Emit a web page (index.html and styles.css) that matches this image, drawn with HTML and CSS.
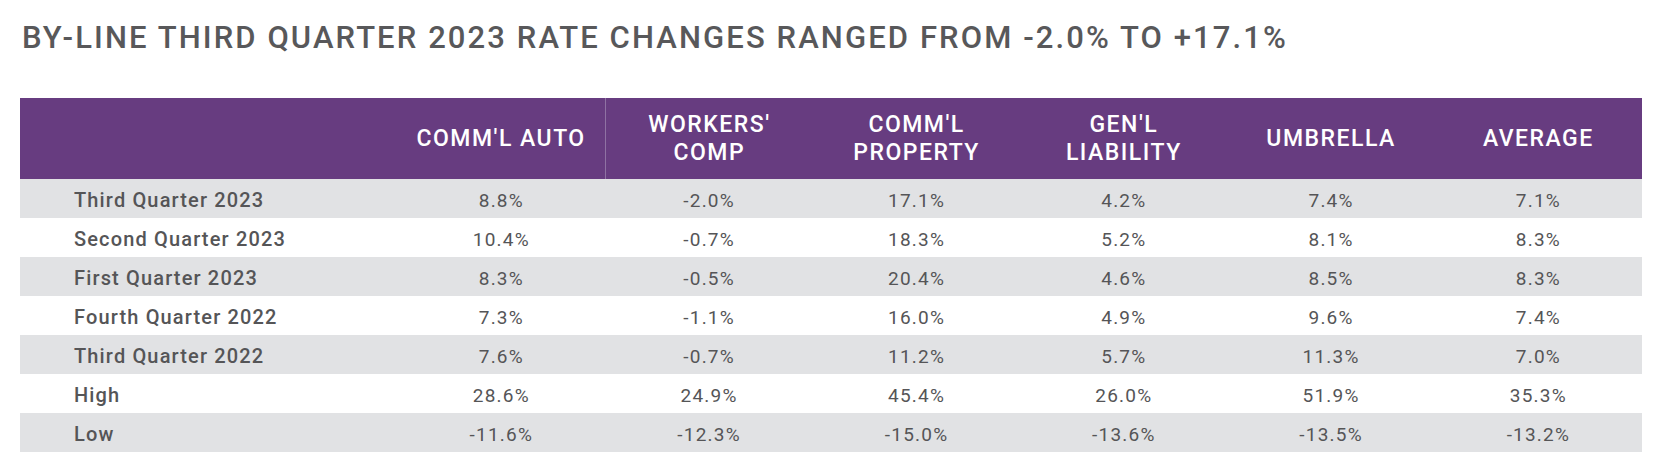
FILE: index.html
```html
<!DOCTYPE html>
<html lang="en">
<head>
<meta charset="utf-8">
<title>By-line rate changes</title>
<link rel="stylesheet" href="styles.css">
</head>
<body>
<h1 class="title">BY-LINE THIRD QUARTER 2023 RATE CHANGES RANGED FROM -2.0% TO +17.1%</h1>
<table class="rates">
  <thead>
    <tr>
      <th class="label-col"></th>
      <th class="sep">COMM'L AUTO</th>
      <th>WORKERS'<br>COMP</th>
      <th>COMM'L<br>PROPERTY</th>
      <th>GEN'L<br>LIABILITY</th>
      <th>UMBRELLA</th>
      <th>AVERAGE</th>
    </tr>
  </thead>
  <tbody>
    <tr class="alt"><td class="label">Third Quarter 2023</td><td>8.8%</td><td>-2.0%</td><td>17.1%</td><td>4.2%</td><td>7.4%</td><td>7.1%</td></tr>
    <tr><td class="label">Second Quarter 2023</td><td>10.4%</td><td>-0.7%</td><td>18.3%</td><td>5.2%</td><td>8.1%</td><td>8.3%</td></tr>
    <tr class="alt"><td class="label">First Quarter 2023</td><td>8.3%</td><td>-0.5%</td><td>20.4%</td><td>4.6%</td><td>8.5%</td><td>8.3%</td></tr>
    <tr><td class="label">Fourth Quarter 2022</td><td>7.3%</td><td>-1.1%</td><td>16.0%</td><td>4.9%</td><td>9.6%</td><td>7.4%</td></tr>
    <tr class="alt"><td class="label">Third Quarter 2022</td><td>7.6%</td><td>-0.7%</td><td>11.2%</td><td>5.7%</td><td>11.3%</td><td>7.0%</td></tr>
    <tr><td class="label">High</td><td>28.6%</td><td>24.9%</td><td>45.4%</td><td>26.0%</td><td>51.9%</td><td>35.3%</td></tr>
    <tr class="alt"><td class="label">Low</td><td>-11.6%</td><td>-12.3%</td><td>-15.0%</td><td>-13.6%</td><td>-13.5%</td><td>-13.2%</td></tr>
  </tbody>
</table>
</body>
</html>
```

FILE: styles.css
```css
html, body {
  margin: 0;
  padding: 0;
  background: #ffffff;
}
body {
  padding: 20px 30px 0 20px;
  font-family: Roboto, "Liberation Sans", Arial, sans-serif;
  color: #555557;
}
.title {
  margin: 0 0 42px 2px;
  font-size: 31px;
  line-height: 36px;
  font-weight: 500;
  color: #58585a;
  letter-spacing: 2.1px;
}
.rates {
  border-collapse: collapse;
  width: 1622px;
  table-layout: fixed;
}
.rates th {
  background: #673c80;
  color: #ffffff;
  font-size: 23px;
  font-weight: 500;
  line-height: 28px;
  letter-spacing: 1.5px;
  height: 81px;
  padding: 0;
  text-align: center;
  vertical-align: middle;
  width: 207px;
}
.rates th.label-col {
  width: 377px;
}
.rates th.sep {
  border-right: 1px solid #8f72a3;
}
.rates td {
  height: 39px;
  padding: 3px 0 0 0;
  box-sizing: border-box;
  font-size: 19px;
  font-weight: 400;
  letter-spacing: 1.2px;
  text-align: center;
  vertical-align: middle;
  color: #555557;
}
.rates td.label {
  text-align: left;
  padding-left: 54px;
  font-size: 20px;
  font-weight: 500;
  letter-spacing: 1.15px;
}
.rates tr.alt td {
  background: #e1e2e4;
}
```
